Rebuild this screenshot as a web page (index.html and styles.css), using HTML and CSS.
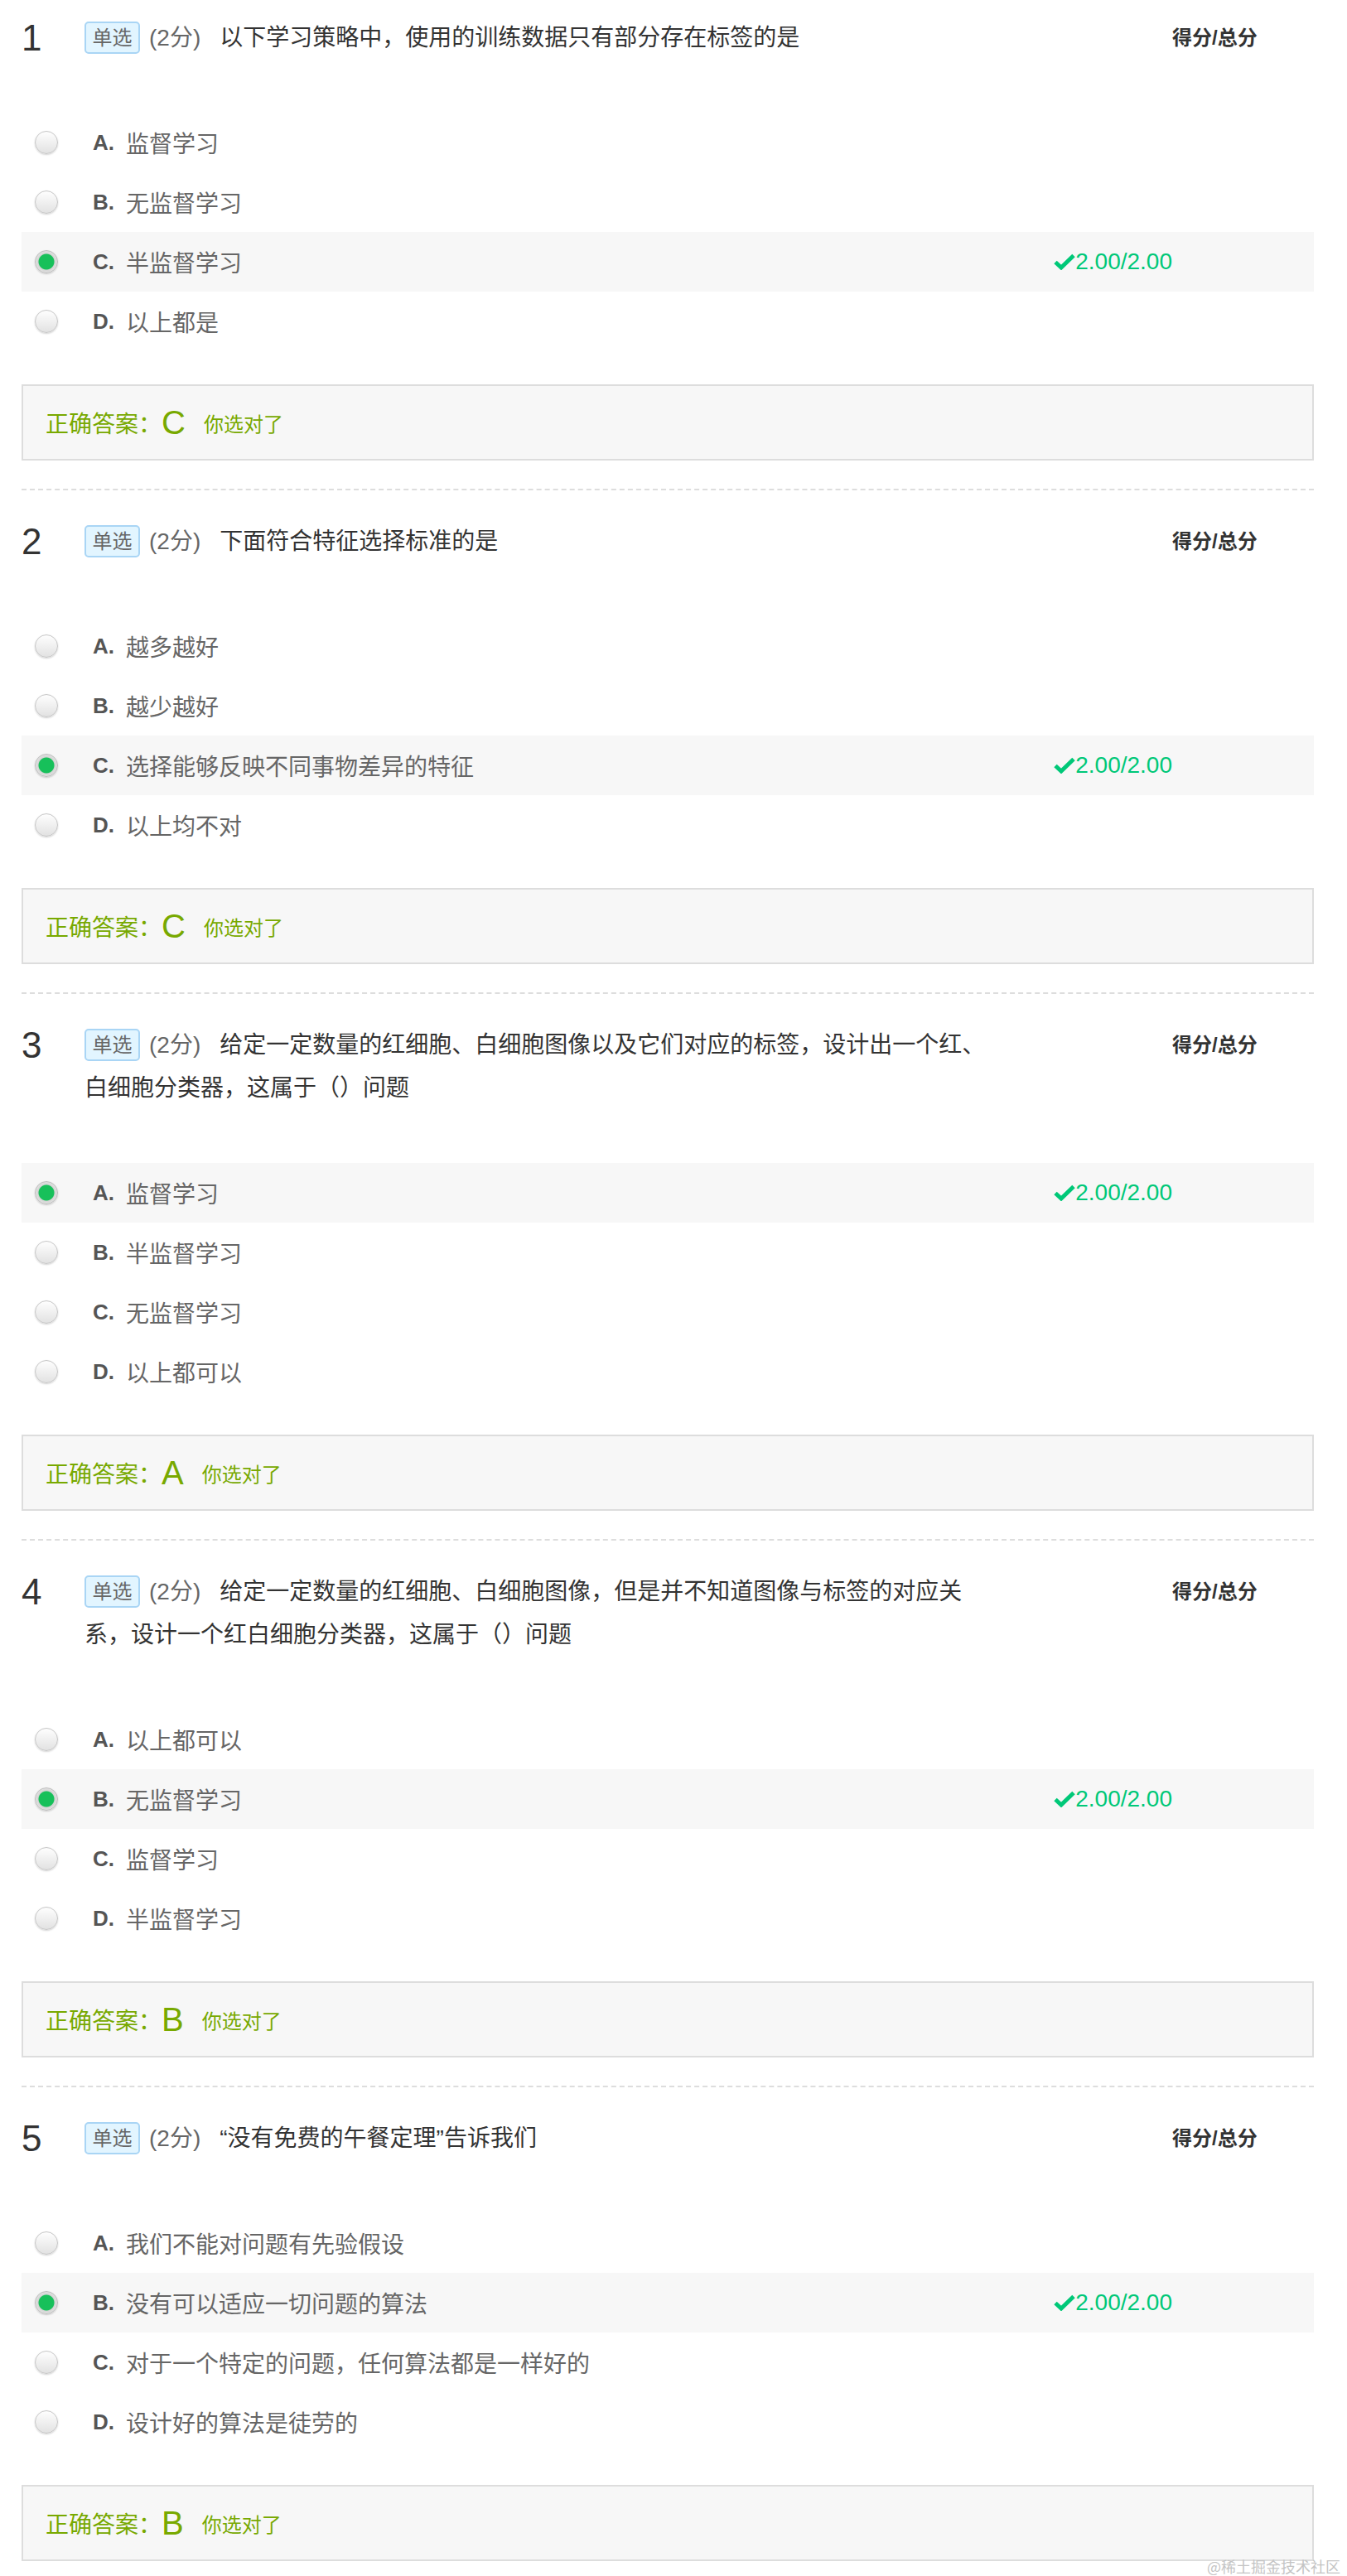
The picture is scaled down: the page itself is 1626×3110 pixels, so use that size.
FILE: index.html
```html
<!DOCTYPE html>
<html lang="zh-CN">
<head>
<meta charset="utf-8">
<title>作业</title>
<link rel="stylesheet" href="styles.css">
</head>
<body>
<div class="page">

  <section class="question">
    <div class="q-head">
      <div class="q-num">1</div>
      <div class="q-title"><span class="tag">单选</span><span class="pts">(2分)</span>以下学习策略中，使用的训练数据只有部分存在标签的是</div>
      <div class="q-score">得分/总分</div>
    </div>
    <ul class="options">
      <li class="opt"><span class="radio"></span><span class="letter">A.</span><span class="opt-text">监督学习</span></li>
      <li class="opt"><span class="radio"></span><span class="letter">B.</span><span class="opt-text">无监督学习</span></li>
      <li class="opt picked"><span class="radio on"></span><span class="letter">C.</span><span class="opt-text">半监督学习</span><span class="got"><svg class="check" viewBox="0 0 26 20" width="26" height="20"><path d="M2 10.5 L9 17 L24 2.5" fill="none" stroke="#00c878" stroke-width="5" stroke-linejoin="miter"/></svg>2.00/2.00</span></li>
      <li class="opt"><span class="radio"></span><span class="letter">D.</span><span class="opt-text">以上都是</span></li>
    </ul>
    <div class="answer"><span class="ans-label">正确答案：</span><span class="ans-key">C</span><span class="ans-note">你选对了</span></div>
  </section>

  <section class="question">
    <div class="q-head">
      <div class="q-num">2</div>
      <div class="q-title"><span class="tag">单选</span><span class="pts">(2分)</span>下面符合特征选择标准的是</div>
      <div class="q-score">得分/总分</div>
    </div>
    <ul class="options">
      <li class="opt"><span class="radio"></span><span class="letter">A.</span><span class="opt-text">越多越好</span></li>
      <li class="opt"><span class="radio"></span><span class="letter">B.</span><span class="opt-text">越少越好</span></li>
      <li class="opt picked"><span class="radio on"></span><span class="letter">C.</span><span class="opt-text">选择能够反映不同事物差异的特征</span><span class="got"><svg class="check" viewBox="0 0 26 20" width="26" height="20"><path d="M2 10.5 L9 17 L24 2.5" fill="none" stroke="#00c878" stroke-width="5" stroke-linejoin="miter"/></svg>2.00/2.00</span></li>
      <li class="opt"><span class="radio"></span><span class="letter">D.</span><span class="opt-text">以上均不对</span></li>
    </ul>
    <div class="answer"><span class="ans-label">正确答案：</span><span class="ans-key">C</span><span class="ans-note">你选对了</span></div>
  </section>

  <section class="question">
    <div class="q-head">
      <div class="q-num">3</div>
      <div class="q-title"><span class="tag">单选</span><span class="pts">(2分)</span>给定一定数量的红细胞、白细胞图像以及它们对应的标签，设计出一个红、白细胞分类器，这属于（）问题</div>
      <div class="q-score">得分/总分</div>
    </div>
    <ul class="options">
      <li class="opt picked"><span class="radio on"></span><span class="letter">A.</span><span class="opt-text">监督学习</span><span class="got"><svg class="check" viewBox="0 0 26 20" width="26" height="20"><path d="M2 10.5 L9 17 L24 2.5" fill="none" stroke="#00c878" stroke-width="5" stroke-linejoin="miter"/></svg>2.00/2.00</span></li>
      <li class="opt"><span class="radio"></span><span class="letter">B.</span><span class="opt-text">半监督学习</span></li>
      <li class="opt"><span class="radio"></span><span class="letter">C.</span><span class="opt-text">无监督学习</span></li>
      <li class="opt"><span class="radio"></span><span class="letter">D.</span><span class="opt-text">以上都可以</span></li>
    </ul>
    <div class="answer"><span class="ans-label">正确答案：</span><span class="ans-key">A</span><span class="ans-note">你选对了</span></div>
  </section>

  <section class="question">
    <div class="q-head">
      <div class="q-num">4</div>
      <div class="q-title"><span class="tag">单选</span><span class="pts">(2分)</span>给定一定数量的红细胞、白细胞图像，但是并不知道图像与标签的对应关系，设计一个红白细胞分类器，这属于（）问题</div>
      <div class="q-score">得分/总分</div>
    </div>
    <ul class="options">
      <li class="opt"><span class="radio"></span><span class="letter">A.</span><span class="opt-text">以上都可以</span></li>
      <li class="opt picked"><span class="radio on"></span><span class="letter">B.</span><span class="opt-text">无监督学习</span><span class="got"><svg class="check" viewBox="0 0 26 20" width="26" height="20"><path d="M2 10.5 L9 17 L24 2.5" fill="none" stroke="#00c878" stroke-width="5" stroke-linejoin="miter"/></svg>2.00/2.00</span></li>
      <li class="opt"><span class="radio"></span><span class="letter">C.</span><span class="opt-text">监督学习</span></li>
      <li class="opt"><span class="radio"></span><span class="letter">D.</span><span class="opt-text">半监督学习</span></li>
    </ul>
    <div class="answer"><span class="ans-label">正确答案：</span><span class="ans-key">B</span><span class="ans-note">你选对了</span></div>
  </section>

  <section class="question">
    <div class="q-head">
      <div class="q-num">5</div>
      <div class="q-title"><span class="tag">单选</span><span class="pts">(2分)</span>“没有免费的午餐定理”告诉我们</div>
      <div class="q-score">得分/总分</div>
    </div>
    <ul class="options">
      <li class="opt"><span class="radio"></span><span class="letter">A.</span><span class="opt-text">我们不能对问题有先验假设</span></li>
      <li class="opt picked"><span class="radio on"></span><span class="letter">B.</span><span class="opt-text">没有可以适应一切问题的算法</span><span class="got"><svg class="check" viewBox="0 0 26 20" width="26" height="20"><path d="M2 10.5 L9 17 L24 2.5" fill="none" stroke="#00c878" stroke-width="5" stroke-linejoin="miter"/></svg>2.00/2.00</span></li>
      <li class="opt"><span class="radio"></span><span class="letter">C.</span><span class="opt-text">对于一个特定的问题，任何算法都是一样好的</span></li>
      <li class="opt"><span class="radio"></span><span class="letter">D.</span><span class="opt-text">设计好的算法是徒劳的</span></li>
    </ul>
    <div class="answer"><span class="ans-label">正确答案：</span><span class="ans-key">B</span><span class="ans-note">你选对了</span></div>
  </section>

</div>
<div class="watermark">@稀土掘金技术社区</div>
</body>
</html>
```

FILE: styles.css
```css
html, body {
  margin: 0;
  padding: 0;
  background: #ffffff;
}

body {
  font-family: "Liberation Sans", "Noto Sans CJK SC", sans-serif;
  color: #333333;
  position: relative;
  height: 3110px;
  overflow: hidden;
}

.page {
  width: 1560px;
  margin-left: 26px;
}

.question {
  padding: 36px 0 34px;
  border-bottom: 2px dashed #dddddd;
}

.question:first-child {
  padding-top: 20px;
}

.question:last-child {
  border-bottom: none;
  padding-bottom: 0;
}

.q-head {
  display: grid;
  grid-template-columns: 76px 1100px 1fr;
  align-items: start;
}

.q-num {
  font-size: 44px;
  line-height: 52px;
  color: #333333;
}

.q-title {
  font-size: 28px;
  line-height: 52px;
  color: #333333;
}

.tag {
  display: inline-block;
  box-sizing: border-box;
  width: 67px;
  height: 39px;
  line-height: 35px;
  border: 2px solid #a9d5f5;
  border-radius: 5px;
  background: #e2f5ff;
  color: #666666;
  font-size: 24px;
  text-align: center;
  vertical-align: top;
  margin-top: 6px;
  margin-right: 11px;
}

.pts {
  color: #666666;
  margin-right: 23px;
}

.q-score {
  font-size: 24px;
  font-weight: bold;
  line-height: 52px;
  color: #333333;
  margin-left: 213px;
  white-space: nowrap;
}

.options {
  list-style: none;
  margin: 64px 0 0;
  padding: 0;
}

.opt {
  display: flex;
  align-items: center;
  height: 72px;
  padding-left: 16px;
  font-size: 28px;
  color: #666666;
}

.opt.picked {
  background: #f7f7f7;
}

.radio {
  flex: none;
  width: 28px;
  height: 28px;
  box-sizing: border-box;
  border-radius: 50%;
  border: 1px solid #c6c6c6;
  background: linear-gradient(#fefefe, #e2e2e2);
  box-shadow: 0 1px 2px rgba(0, 0, 0, 0.18);
  margin-right: 42px;
}

.radio.on {
  border-color: #bdbdbd;
  background: radial-gradient(circle at center, #17c05a 0, #17c05a 9px, #d4d4d4 10px, #e6e6e6 14px);
}

.letter {
  width: 40px;
  flex: none;
  font-weight: bold;
  font-size: 26px;
  color: #555555;
}

.opt-text {
  flex: 1;
}

.got {
  display: flex;
  align-items: center;
  margin-right: 171px;
  color: #00c878;
  font-size: 28px;
}

.check {
  display: block;
}

.answer {
  display: flex;
  align-items: center;
  box-sizing: border-box;
  height: 92px;
  margin-top: 40px;
  padding-left: 27px;
  border: 2px solid #dddddd;
  background: #f7f7f7;
  color: #78a900;
}

.ans-label {
  font-size: 28px;
}

.ans-key {
  font-size: 40px;
  margin-right: 22px;
}

.ans-note {
  font-size: 24px;
}

.watermark {
  position: absolute;
  right: 8px;
  bottom: 0;
  font-size: 18px;
  line-height: 24px;
  color: #c4c4c4;
  font-family: "Noto Sans CJK SC", sans-serif;
}
```
